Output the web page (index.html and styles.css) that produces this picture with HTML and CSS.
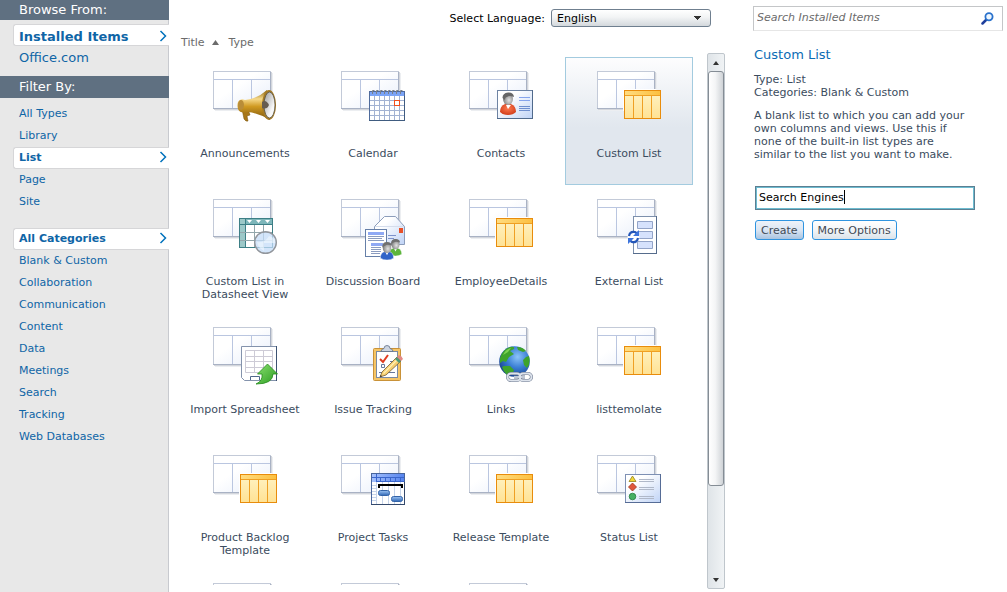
FILE: index.html
```html
<!DOCTYPE html>
<html lang="en">
<head>
  <meta charset="UTF-8" />
  <title>Create</title>
  <meta name="viewport" content="width=device-width, initial-scale=1" />
  <link rel="stylesheet" href="styles.css">
</head>
<body>

  <!-- shared icon shapes -->
  <svg class="defs" width="0" height="0" aria-hidden="true">
    <defs>
      <linearGradient id="gSheet" x1="0" y1="0" x2="1" y2="1"><stop offset="0.4" stop-color="#fff"/><stop offset="1" stop-color="#e6edfa"/></linearGradient>
      <linearGradient id="gHead" x1="0" y1="0" x2="1" y2="0"><stop offset="0" stop-color="#ffdc80"/><stop offset="1" stop-color="#fcc040"/></linearGradient>
      <linearGradient id="gBody" x1="0" y1="0" x2="0" y2="1"><stop offset="0" stop-color="#fff3c4"/><stop offset="1" stop-color="#ffe294"/></linearGradient>
      <linearGradient id="gCard" x1="0" y1="0" x2="1" y2="1"><stop offset="0.3" stop-color="#fff"/><stop offset="1" stop-color="#bfd3f6"/></linearGradient>
      <linearGradient id="gHorn" x1="0" y1="0" x2="0" y2="1"><stop offset="0" stop-color="#8c6510"/><stop offset="0.3" stop-color="#f6d98a"/><stop offset="0.55" stop-color="#d09a22"/><stop offset="1" stop-color="#7a540c"/></linearGradient>
      <linearGradient id="gBell" x1="0" y1="0" x2="1" y2="1"><stop offset="0" stop-color="#9a9a9a"/><stop offset="0.7" stop-color="#f8f8f8"/></linearGradient>
      <linearGradient id="gArrow" x1="0" y1="0" x2="1" y2="1"><stop offset="0" stop-color="#8be070"/><stop offset="1" stop-color="#2a9c20"/></linearGradient>
      <radialGradient id="gGlobe" cx="0.6" cy="0.35" r="0.7"><stop offset="0" stop-color="#8cc4f8"/><stop offset="0.5" stop-color="#3a7fd4"/><stop offset="1" stop-color="#173f8c"/></radialGradient>
      <radialGradient id="gGray" cx="0.6" cy="0.6" r="0.7"><stop offset="0" stop-color="#e2e2e2"/><stop offset="1" stop-color="#6a6a6a"/></radialGradient>
      <radialGradient id="gRed" cx="0.5" cy="0.4" r="0.7"><stop offset="0" stop-color="#ff7a50"/><stop offset="1" stop-color="#c93412"/></radialGradient>
      <linearGradient id="gBar" x1="0" y1="0" x2="0" y2="1"><stop offset="0" stop-color="#9cc4f4"/><stop offset="1" stop-color="#2f66b4"/></linearGradient>
      <linearGradient id="gPlan" x1="0" y1="0" x2="1" y2="0"><stop offset="0" stop-color="#a4c0fc"/><stop offset="1" stop-color="#5684ee"/></linearGradient>
    </defs>

    <symbol id="sheet" viewBox="0 0 64 64" overflow="visible">
      <path d="M1 38.500h57.500V1" fill="none" stroke="#d3d6dc"/>
      <path d="M2 39.500h57.500V2" fill="none" stroke="#eceef1"/>
      <rect x="0.500" y="0.500" width="57" height="37" fill="url(#gSheet)" stroke="#c3cad8"/>
      <path d="M1 8.500h56M19.500 9v28M38.500 9v28" stroke="#bac6e0" fill="none"/>
      <path d="M0 37.500h58M57.500 1v37" stroke="#a9b2c4" fill="none"/>
    </symbol>

    <symbol id="table" viewBox="0 0 64 64" overflow="visible">
      <path d="M26.500 40V18.500h33" fill="none" stroke="#fff"/>
      <rect x="27.500" y="19.500" width="36" height="28" fill="url(#gBody)" stroke="#e88c0c"/>
      <rect x="28" y="20" width="35" height="4" fill="url(#gHead)"/>
      <path d="M28 24.500h35M36.500 25v22M45.500 25v22M54.500 25v22" stroke="#efa024" fill="none"/>
    </symbol>

    <symbol id="megaphone" viewBox="0 0 64 64" overflow="visible">
      <path d="M29 38l2 10q2 3 4 2l-1-5 3-1-2-6z" fill="#a87718" stroke="#74500c" stroke-width="0.500"/>
      <path d="M25 31q2-4 7-2 12-1 22-10l3 30q-12-7-22-8-8 2-10-3-1-4 0-7z" fill="url(#gHorn)"/>
      <ellipse cx="56" cy="34" rx="7" ry="15" fill="#a57a24"/>
      <ellipse cx="56.500" cy="34" rx="5.500" ry="13" fill="url(#gBell)" stroke="#55503f" stroke-width="0.800"/>
      <path d="M49 31q4-3 7 3-2 5-7 3z" fill="#665c50"/>
      <ellipse cx="28" cy="34" rx="3" ry="5" fill="#b98d38"/>
    </symbol>

    <symbol id="calendar" viewBox="0 0 64 64" overflow="visible">
      <rect x="28.500" y="20.500" width="35" height="29" fill="#fff" stroke="#4f6b9c"/>
      <rect x="29" y="21" width="34" height="4" fill="#7ba4f6"/>
      <path d="M29 29.500h34M29 34.500h34M29 39.500h34M29 44.500h34M33.500 25v24M38.500 25v24M43.500 25v24M48.500 25v24M53.500 25v24M58.500 25v24" stroke="#a2b2d2" fill="none"/>
      <path d="M28 49.500h36M63.500 25v25" stroke="#405c80" fill="none"/>
      <path d="M31.500 23v-3.500h2M35.500 23v-3.500h2M39.500 23v-3.500h2M43.500 23v-3.500h2M47.500 23v-3.500h2M51.500 23v-3.500h2M55.500 23v-3.500h2M59.500 23v-3.500h2" stroke="#7d8088" fill="none"/>
      <rect x="53.500" y="29.500" width="5" height="5" fill="#fff" stroke="#f0501e"/>
    </symbol>

    <symbol id="contact" viewBox="0 0 64 64" overflow="visible">
      <rect x="28.500" y="19.500" width="35" height="28" fill="url(#gCard)" stroke="#6d83a3"/>
      <path d="M28 47.500h36M63.500 19v29" stroke="#506a8c" fill="none"/>
      <path d="M31 41q0-6 5-8h6q5 2 5 8-3 3-8 3t-8-3z" fill="url(#gRed)"/>
      <path d="M37 34l2 4 3-4z" fill="#fff"/>
      <ellipse cx="39" cy="28" rx="5" ry="6" fill="url(#gGray)"/>
      <path d="M33.500 27q0-5 5.500-5.500t6 4.500q-5-2-7 0-2 0-2 3z" fill="#666"/>
      <path d="M50 26.500h11M50 29.500h11" stroke="#86a4ec"/>
      <path d="M50 35.500h11M50 37.500h11M50 39.500h11" stroke="#6f8fcf"/>
    </symbol>

    <symbol id="datasheet" viewBox="0 0 64 64" overflow="visible">
      <rect x="26.500" y="19.500" width="33" height="29" fill="#fff" stroke="#3d7f86"/>
      <path d="M27 20h5v28h-5z" fill="#9cc8c8"/>
      <path d="M32 20h27v5H32z" fill="#7db6ba"/>
      <path d="M34 21h5l-2.500 3zM43 21h5l-2.500 3zM52 21h5l-2.500 3z" fill="#fff"/>
      <path d="M27 25.500h32M32.500 20v28" stroke="#3d7f86"/>
      <path d="M27 33.500h32M27 41.500h32M41.500 26v22M50.500 26v22" stroke="#93a7ac"/>
      <circle cx="52.500" cy="43.500" r="10.800" fill="#c4dcf8" fill-opacity="0.750" stroke="#92969c" stroke-width="1.400"/>
      <path d="M44 43q8 1 12-6 4 1 6 4v3H51v8q-6-3-7-9z" fill="#f2f8ff" fill-opacity="0.600"/>
    </symbol>

    <symbol id="person" viewBox="0 0 16 20" overflow="visible">
      <path d="M1 17q0-6 5-7h4q5 1 5 7-3 2-7 2t-7-2z" stroke="#fff" stroke-width="0.500"/>
      <path d="M6 10l2 4 2-4z" fill="#fff"/>
      <ellipse cx="8" cy="6" rx="4.500" ry="5.500" fill="url(#gGray)"/>
      <path d="M3 5q0-5 5-5t5 4q-5-2-7 0-2 0-2 2z" fill="#707070"/>
    </symbol>

    <symbol id="discussion" viewBox="0 0 64 64" overflow="visible">
      <path d="M33.500 45V27.500l10-10h11l9 10V45.500h-30z" fill="url(#gCard)" stroke="#8c9dbb"/>
      <path d="M34 27.500h29" stroke="#d5ddec"/>
      <rect x="58" y="29" width="4" height="5" fill="#e85028"/>
      <path d="M47 36.500h8M47 39.500h6" stroke="#7c92cc"/>
      <rect x="24.500" y="30.500" width="21" height="27" fill="#fff" stroke="#667fa8"/>
      <path d="M27 33h16v3H27zM30 44h12v3H30z" fill="#8fa9f4"/>
      <path d="M27 37.500h16M27 39.500h14M27 41.500h16M30 48.500h10M30 50.500h10M30 52.500h10M30 54.500h9" stroke="#8b9cc0"/>
      <use href="#person" x="47" y="40" width="15" height="18" fill="#5cb53c"/>
      <use href="#person" x="38" y="43" width="16" height="19" fill="#2f63c8"/>
    </symbol>

    <symbol id="external" viewBox="0 0 64 64" overflow="visible">
      <rect x="36.500" y="17.500" width="23" height="37" fill="#fff" stroke="#7d90ac"/>
      <path d="M36 54.500h24M59.500 17v38" stroke="#566c8c" fill="none"/>
      <path d="M40.500 22.500h15v7h-15zM40.500 32.500h15v7h-15zM40.500 42.500h15v7h-15z" fill="#d6e2fc" stroke="#93a4c8"/>
      <circle cx="36.500" cy="38" r="6" fill="#fff"/>
      <path d="M32 37q1-5 6-4l3 2M41 39q-1 5-6 4l-3-2" fill="none" stroke="#2456b8" stroke-width="2.200"/>
      <path d="M42 31v6h-6zM31 45v-6h6z" fill="#3d74dc"/>
    </symbol>

    <symbol id="import" viewBox="0 0 64 64" overflow="visible">
      <path d="M28.500 19.500h35v34h-32l-3-3z" fill="#fff" stroke="#8493ac"/>
      <path d="M63.500 19v35" stroke="#3c5272"/>
      <path d="M32.500 23.500h27v22h-27zM33 29.500h26M33 34.500h26M33 40.500h26M41.500 24v21M50.500 24v21" fill="none" stroke="#cdcbd6"/>
      <path d="M37.500 53v-3.500h9V53" fill="none" stroke="#50688c"/>
      <path d="M54.500 37l10 10H60q0 10-17 10 7-3 6-10h-4.500z" fill="url(#gArrow)" stroke="#258a1c" stroke-width="0.800"/>
    </symbol>

    <symbol id="issue" viewBox="0 0 64 64" overflow="visible">
      <rect x="32.500" y="21.500" width="27" height="32" rx="1" fill="#f6c566" stroke="#c99238"/>
      <rect x="35.500" y="24.500" width="21" height="26" fill="#fff" stroke="#7a8aa2"/>
      <path d="M40 24.500q0-2.500 3-3 0-3 3-3t3 3q3 .5 3 3z" fill="#ccd4e0" stroke="#5f6f86" stroke-width="0.800"/>
      <path d="M39 32l3 3 5-7" fill="none" stroke="#e03c20" stroke-width="2"/>
      <path d="M49 34.500h5M40.500 37.500h3v3h-3zM38 45.500h4M47 45.500h7" fill="none" stroke="#66789c"/>
      <path d="M39 50l2-5 15-15 4 4-15 14z" fill="#f7cf70" stroke="#725a34" stroke-width="0.800"/>
      <path d="M42.500 46.500L57 32" stroke="#fff0b8" stroke-width="1.200"/>
      <path d="M54 32l2-2 4 4-2 2z" fill="#4d9a78"/>
      <path d="M56 30l2-2q3 1 4 4l-2 2z" fill="#e38a86"/>
      <path d="M39 50l.8-2 1.200 1.200z" fill="#222"/>
    </symbol>

    <symbol id="globe" viewBox="0 0 64 64" overflow="visible">
      <circle cx="45.500" cy="34.500" r="15.300" fill="url(#gGlobe)"/>
      <path d="M31 31q2-8 10-11 5-1 4 2l-4 2 4 3-5 3-3 5-3-1-3 2zM48 20q6 0 9 4l-3 1-5-2zM60 29q2 7-2 12l-3-3-1-5 3-3zM35 39l6 0 4 4-2 5h-5q-4-4-5-8z" fill="#3ea32c"/>
      <path d="M34 28q3-6 8-7l-3 4z" fill="#7cd255"/>
      <rect x="38.500" y="46.500" width="13" height="7" rx="3.500" fill="none" stroke="#66728a" stroke-width="3"/>
      <rect x="50.500" y="46.500" width="12" height="7" rx="3.500" fill="none" stroke="#66728a" stroke-width="3"/>
      <path d="M45 50h11" stroke="#66728a" stroke-width="3"/>
      <rect x="38.500" y="46.500" width="13" height="7" rx="3.500" fill="none" stroke="#dde3ec" stroke-width="2"/>
      <rect x="50.500" y="46.500" width="12" height="7" rx="3.500" fill="none" stroke="#dde3ec" stroke-width="2"/>
      <path d="M45 50h11" stroke="#dde3ec" stroke-width="1.500"/>
    </symbol>

    <symbol id="gantt" viewBox="0 0 64 64" overflow="visible">
      <rect x="30.500" y="18.500" width="33" height="31" fill="#fff" stroke="#48659c"/>
      <rect x="31" y="19" width="32" height="8" fill="url(#gPlan)"/>
      <path d="M31 22.500h32M35.500 19v8M39.500 23v4M44.500 23v4M49.500 23v4M54.500 23v4M59.500 23v4M36 26.500h27" stroke="#3a66cc"/>
      <path d="M31 30.500h4M31 33.500h4M31 36.500h4M31 39.500h4M31 42.500h4M31 45.500h4M35.500 27v22M41.500 27v22M47.500 27v22M53.500 27v22M59.500 27v22" stroke="#c6d4ea"/>
      <path d="M30 49.500h34M63.500 27v23" stroke="#34496c" fill="none"/>
      <path d="M38 33v-3h23v3" fill="none" stroke="#000" stroke-width="2"/>
      <rect x="37.500" y="35.500" width="11" height="5" rx="2" fill="url(#gBar)" stroke="#3464a8"/>
      <rect x="50.500" y="41.500" width="11" height="5" rx="2" fill="url(#gBar)" stroke="#3464a8"/>
    </symbol>

    <symbol id="status" viewBox="0 0 64 64" overflow="visible">
      <rect x="28.500" y="19.500" width="35" height="28" fill="url(#gCard)" stroke="#7d90b4"/>
      <path d="M28 47.500h36M63.500 19v29" stroke="#566c96" fill="none"/>
      <path d="M35.500 21l3.500 5.500h-7z" fill="#f0d838" stroke="#92801c" stroke-width="0.800"/>
      <path d="M35.500 28l4 4-4 4-4-4z" fill="#e0583c" stroke="#9c3018" stroke-width="0.800"/>
      <circle cx="35.500" cy="41.500" r="3.300" fill="#46b062" stroke="#257c3e" stroke-width="0.800"/>
      <path d="M42 24.500h15M42 26.500h15M42 32.500h15M42 34.500h15M42 41.500h15M42 43.500h15" stroke="#b0b8c8"/>
    </symbol>

    <symbol id="chevron" viewBox="0 0 8 12">
      <path d="M1.500 1l5 5-5 5" fill="none" stroke="#0072bc" stroke-width="1.500"/>
    </symbol>
  </svg>

  <div class="page">
    <nav class="sidebar">
      <h2 class="side-title first">Browse From:</h2>
      <ul class="menu large">
        <li><a href="#" class="active">Installed Items<svg class="chevron"><use href="#chevron"/></svg></a></li>
        <li><a href="#">Office.com</a></li>
      </ul>
      <h2 class="side-title">Filter By:</h2>
      <ul class="menu types">
        <li><a href="#">All Types</a></li>
        <li><a href="#">Library</a></li>
        <li><a href="#" class="active">List<svg class="chevron"><use href="#chevron"/></svg></a></li>
        <li><a href="#">Page</a></li>
        <li><a href="#">Site</a></li>
      </ul>
      <ul class="menu categories">
        <li><a href="#" class="active">All Categories<svg class="chevron"><use href="#chevron"/></svg></a></li>
        <li><a href="#">Blank &amp; Custom</a></li>
        <li><a href="#">Collaboration</a></li>
        <li><a href="#">Communication</a></li>
        <li><a href="#">Content</a></li>
        <li><a href="#">Data</a></li>
        <li><a href="#">Meetings</a></li>
        <li><a href="#">Search</a></li>
        <li><a href="#">Tracking</a></li>
        <li><a href="#">Web Databases</a></li>
      </ul>
    </nav>

    <main class="content">
      <div class="language">
        <label for="language">Select Language:</label>
        <select id="language">
          <option>English</option>
        </select>
      </div>
      <div class="sort">
        <button type="button">Title <svg class="sort-arrow" viewBox="0 0 7 5"><path d="M0 5L3.500 0 7 5z" fill="#6b6b6b"/></svg></button>
        <button type="button">Type</button>
      </div>

      <div class="list">
        <div class="grid">
          <a href="#" class="tile"><svg class="icon"><use href="#sheet"/><use href="#megaphone"/></svg><span>Announcements</span></a>
          <a href="#" class="tile"><svg class="icon"><use href="#sheet"/><use href="#calendar"/></svg><span>Calendar</span></a>
          <a href="#" class="tile"><svg class="icon"><use href="#sheet"/><use href="#contact"/></svg><span>Contacts</span></a>
          <a href="#" class="tile selected"><svg class="icon"><use href="#sheet"/><use href="#table"/></svg><span>Custom List</span></a>
          <a href="#" class="tile"><svg class="icon"><use href="#sheet"/><use href="#datasheet"/></svg><span>Custom List in Datasheet View</span></a>
          <a href="#" class="tile"><svg class="icon"><use href="#sheet"/><use href="#discussion"/></svg><span>Discussion Board</span></a>
          <a href="#" class="tile"><svg class="icon"><use href="#sheet"/><use href="#table"/></svg><span>EmployeeDetails</span></a>
          <a href="#" class="tile"><svg class="icon"><use href="#sheet"/><use href="#external"/></svg><span>External List</span></a>
          <a href="#" class="tile"><svg class="icon"><use href="#sheet"/><use href="#import"/></svg><span>Import Spreadsheet</span></a>
          <a href="#" class="tile"><svg class="icon"><use href="#sheet"/><use href="#issue"/></svg><span>Issue Tracking</span></a>
          <a href="#" class="tile"><svg class="icon"><use href="#sheet"/><use href="#globe"/></svg><span>Links</span></a>
          <a href="#" class="tile"><svg class="icon"><use href="#sheet"/><use href="#table"/></svg><span>listtemolate</span></a>
          <a href="#" class="tile"><svg class="icon"><use href="#sheet"/><use href="#table"/></svg><span>Product Backlog Template</span></a>
          <a href="#" class="tile"><svg class="icon"><use href="#sheet"/><use href="#gantt"/></svg><span>Project Tasks</span></a>
          <a href="#" class="tile"><svg class="icon"><use href="#sheet"/><use href="#table"/></svg><span>Release Template</span></a>
          <a href="#" class="tile"><svg class="icon"><use href="#sheet"/><use href="#status"/></svg><span>Status List</span></a>
          <a href="#" class="tile"><svg class="icon"><use href="#sheet"/></svg></a>
          <a href="#" class="tile"><svg class="icon"><use href="#sheet"/></svg></a>
          <a href="#" class="tile"><svg class="icon"><use href="#sheet"/></svg></a>
        </div>
        <div class="scrollbar">
          <button type="button" aria-label="Scroll up"><svg viewBox="0 0 6 4"><path d="M0 4l3-4 3 4z" fill="#333"/></svg></button>
          <div class="track"><div class="thumb"></div></div>
          <button type="button" aria-label="Scroll down"><svg viewBox="0 0 6 4"><path d="M0 0l3 4 3-4z" fill="#333"/></svg></button>
        </div>
      </div>
    </main>

    <aside class="details">
      <form class="search">
        <input type="text" placeholder="Search Installed Items" aria-label="Search Installed Items">
        <button type="button" aria-label="Search">
          <svg viewBox="0 0 13 13"><path d="M1.500 11.500L5 8" stroke="#1f3f9c" stroke-width="2.500" stroke-linecap="round"/><circle cx="8" cy="4.800" r="3.600" fill="#eef7ff" stroke="#2a72cc" stroke-width="1.800"/></svg>
        </button>
      </form>
      <h1>Custom List</h1>
      <p class="meta">Type: List<br>Categories: Blank &amp; Custom</p>
      <p class="description">A blank list to which you can add your own columns and views. Use this if none of the built-in list types are similar to the list you want to make.</p>
      <form class="create">
        <div class="name">
          <input type="text" value="Search Engines" aria-label="Name">
          <span class="caret"></span>
        </div>
        <div class="actions">
          <button type="button" class="primary">Create</button>
          <button type="button">More Options</button>
        </div>
      </form>
    </aside>
  </div>

</body>
</html>
```
FILE: styles.css
```css
:root {
  --bar: #5f7081;
  --side: #e8e8e8;
  --line: #c8cacf;
  --link: #0f65a6;
  --text: #3b4c5e;
}

* {
  box-sizing: border-box;
}

body {
  margin: 0;
  font-family: "DejaVu Sans", Verdana, sans-serif;
  font-size: 11px;
  line-height: 13px;
  color: var(--text);
  background: #fff;
}

a {
  color: inherit;
  text-decoration: none;
}

input, select, button {
  font: inherit;
  margin: 0;
}

.defs {
  position: absolute;
}

.page {
  display: flex;
  height: 100vh;
  overflow: hidden;
}

/* sidebar */
.sidebar {
  width: 169px;
  flex: none;
  background: linear-gradient(to left, var(--line) 1px, var(--side) 1px);
}

.side-title {
  margin: 0;
  padding: 0 19px;
  font-size: 13px;
  font-weight: normal;
  line-height: 22px;
  color: #fff;
  background: var(--bar);
}

.side-title.first {
  line-height: 20px;
}

.menu {
  list-style: none;
  margin: 0;
  padding: 0 0 0 13px;
  color: var(--link);
}

.menu.large {
  font-size: 13px;
  padding-top: 4px;
  padding-bottom: 8px;
}

.menu.types {
  padding-top: 5px;
}

.menu.categories {
  padding-top: 15px;
}

.menu a {
  display: flex;
  align-items: center;
  justify-content: space-between;
  height: 22px;
  padding: 0 2px 2px 6px;
}

.menu.large a {
  padding-bottom: 0;
}

.menu a.active {
  padding: 0 2px 2px 5px;
  font-weight: bold;
  background: #fff;
  border: 1px solid #d6d6d8;
  border-right: none;
  border-radius: 3px 0 0 3px;
}

.menu.large a.active {
  padding: 2px 2px 0 5px;
}

.chevron {
  width: 8px;
  height: 12px;
}

/* template list */
.content {
  flex: 1;
  min-width: 0;
  display: flex;
  flex-direction: column;
  padding: 9px 0 3px 12px;
}

.language {
  display: flex;
  align-items: center;
  justify-content: flex-end;
  gap: 6px;
  padding-right: 14px;
  color: #000;
}

.language select {
  width: 160px;
  height: 18px;
  padding: 0 5px;
  appearance: none;
  color: #000;
  border: 1px solid #6f7f8f;
  border-radius: 3px;
  background:
    conic-gradient(from -45deg at 50% 100%, #333 90deg, transparent 0) right 8px center / 8px 4px no-repeat,
    linear-gradient(#fff, #f2f4f5 45%, #d3d8dc);
  background:
    linear-gradient(to bottom left, #333 50%, transparent 50%) right 8px center / 4px 4px no-repeat,
    linear-gradient(to bottom right, #333 50%, transparent 50%) right 8px center / 4px 4px no-repeat,
    linear-gradient(#fff, #f2f4f5 45%, #d3d8dc);
  background-position: right 12px center, right 8px center, 0 0;
}

.sort {
  display: flex;
  align-items: flex-start;
  gap: 10px;
  padding: 9px 0;
  height: 35px;
}

.sort button {
  display: flex;
  align-items: center;
  gap: 7px;
  padding: 0;
  border: none;
  background: none;
  color: #6b6b6b;
}

.sort-arrow {
  width: 7px;
  height: 5px;
}

.list {
  flex: 1;
  min-height: 0;
  display: flex;
  margin-top: -9px;
}

.grid {
  flex: 1;
  min-width: 0;
  display: grid;
  grid-template-columns: repeat(auto-fill, 128px);
  grid-auto-rows: 128px;
  align-content: start;
  margin: 4px 0;
  overflow: hidden;
}

.tile {
  display: flex;
  flex-direction: column;
  align-items: center;
  gap: 12px;
  padding: 13px 15px 0;
  border: 1px solid transparent;
  text-align: center;
}

.tile.selected {
  border-color: #a3cbdf;
  background: linear-gradient(#fdfdfe, #e1e7ee 55%);
}

.icon {
  width: 64px;
  height: 64px;
  flex: none;
  overflow: visible;
}

.tile span {
  margin: 0 -12px;
}

/* scrollbar */
.scrollbar {
  width: 18px;
  display: flex;
  flex-direction: column;
  border: 1px solid #bfc6cc;
  border-radius: 2px;
  background: linear-gradient(to right, #dfe4e8, #f0f3f5);
}

.scrollbar button {
  height: 17px;
  padding: 0;
  display: flex;
  align-items: center;
  justify-content: center;
  border: none;
  background: none;
}

.scrollbar svg {
  width: 6px;
  height: 4px;
}

.track {
  flex: 1;
}

.thumb {
  height: 83%;
  border: 1px solid #858d95;
  border-radius: 3px;
  background: linear-gradient(to right, #fff, #f4f5f6 45%, #cfd3d7);
}

/* details */
.details {
  width: 282px;
  flex: none;
  padding: 6px 4px 0 28px;
}

.search {
  display: flex;
  align-items: center;
  height: 25px;
  padding-right: 8px;
  border: 1px solid #c4c6c8;
  border-bottom-color: #e6e6e6;
}

.search input {
  flex: 1;
  min-width: 0;
  padding: 0 3px 2px;
  border: none;
  outline: none;
  background: none;
}

.search input::placeholder {
  color: #6b6b6b;
  font-style: italic;
  opacity: 1;
}

.search button {
  display: flex;
  padding: 0;
  border: none;
  background: none;
}

.search button svg {
  width: 13px;
  height: 13px;
}

.details h1 {
  margin: 16px 1px 0;
  font-size: 13px;
  font-weight: normal;
  line-height: 16px;
  color: #0b6cb5;
}

.details p {
  margin: 10px 34px 0 1px;
}

.create {
  margin: 25px 28px 0 2px;
}

.name {
  position: relative;
}

.name input {
  display: block;
  width: 100%;
  height: 24px;
  padding: 0 3px 2px;
  color: #000;
  border: 1px solid #5c7f92;
  outline: none;
  box-shadow: inset 0 0 0 1px #6dbcd0;
}

.caret {
  position: absolute;
  left: 89px;
  top: 4px;
  width: 1px;
  height: 14px;
  background: #000;
}

.actions {
  display: flex;
  gap: 8px;
  margin-top: 10px;
}

.actions button {
  height: 20px;
  padding: 0 5px;
  color: #3f4a55;
  border: 1px solid #2f94e0;
  border-radius: 3px;
  background: linear-gradient(#fff, #f2f5f8 50%, #dbe3ea);
}

.actions button.primary {
  background: linear-gradient(#eef3f9, #dbe6f3 50%, #a9c4e0);
}
```
